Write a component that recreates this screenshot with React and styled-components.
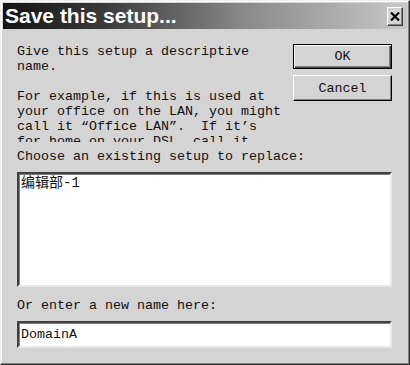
import React from 'react';
import styled, {createGlobalStyle} from "styled-components";

const GlobalStyle = createGlobalStyle`
  html, body {
    margin: 0;
    padding: 0;
    background: #d4d4d4;
  }
`

export default function App(){
    return (
        <>
            <GlobalStyle />
            <Window>
                <TitleBar>
                    <Title>Save this setup...</Title>
                    <CloseButton>
                        <svg width="10" height="9" viewBox="0 0 10 9">
                            <path d="M1 0.5 L9 8.5 M9 0.5 L1 8.5" stroke="#000" strokeWidth="2.2" />
                        </svg>
                    </CloseButton>
                </TitleBar>
                <Body>
                    <TopRow>
                        <Description>
                            {"Give this setup a descriptive name.\n\nFor example, if this is used at your office on the LAN, you might call it “Office LAN”.  If it’s for home on your DSL, call it"}
                        </Description>
                        <Buttons>
                            <Button $default>OK</Button>
                            <Button>Cancel</Button>
                        </Buttons>
                    </TopRow>
                    <Label>Choose an existing setup to replace:</Label>
                    <ListBox>
                        <ListItem>编辑部-1</ListItem>
                    </ListBox>
                    <Label $gap="11px">Or enter a new name here:</Label>
                    <Input>DomainA</Input>
                </Body>
            </Window>
        </>
    );
}

const Window = styled.div`
  width: 410px;
  height: 365px;
  box-sizing: border-box;
  background: #d4d4d4;
  border: 1px solid;
  border-color: #efefef #303030 #303030 #efefef;
  box-shadow: inset -1px -1px 0 #808080, inset 1px 1px 0 #ffffff;
  padding: 2px;
  font-family: "Liberation Mono", "Noto Sans CJK SC", monospace;
  font-size: 13.33px;
  color: #111;
`
const TitleBar = styled.div`
  height: 26px;
  display: flex;
  align-items: center;
  justify-content: space-between;
  padding: 0 4px 0 2px;
  background: linear-gradient(to right, #141414 0%, #3a3a3a 25%, #8a8a8a 60%, #c8c8c8 100%);
`
const Title = styled.div`
  font-family: "Liberation Sans", Arial, sans-serif;
  font-weight: bold;
  font-size: 21px;
  color: #ffffff;
  line-height: 26px;
`
const CloseButton = styled.div`
  width: 16px;
  height: 19px;
  box-sizing: border-box;
  display: flex;
  align-items: center;
  justify-content: center;
  background: #d4d4d4;
  border: 1px solid;
  border-color: #ffffff #404040 #404040 #ffffff;
  box-shadow: inset -1px -1px 0 #808080;
  margin-top: 1px;
`
const Body = styled.div`
  padding: 15px 15px 0 14px;
  display: flex;
  flex-direction: column;
`
const TopRow = styled.div`
  display: flex;
  gap: 10px;
`
const Description = styled.div`
  flex: 1;
  height: 98px;
  overflow: hidden;
  white-space: pre-wrap;
  line-height: 15px;
`
const Buttons = styled.div`
  width: 99px;
  display: flex;
  flex-direction: column;
  gap: 6px;
`
const Button = styled.div`
  height: ${props => props.$default ? "25px" : "26px"};
  box-sizing: border-box;
  display: flex;
  align-items: center;
  justify-content: center;
  background: #d4d4d4;
  border: 1px solid;
  border-color: ${props => props.$default ? "#000" : "#ffffff #000 #000 #ffffff"};
  box-shadow: ${props => props.$default
    ? "inset 1px 1px 0 #ffffff, inset -1px -1px 0 #404040, inset -2px -2px 0 #808080"
    : "inset -1px -1px 0 #808080"};
`
const Label = styled.div`
  line-height: 15px;
  margin-top: ${props => props.$gap || "7px"};
  margin-bottom: 8px;
`
const ListBox = styled.div`
  height: 115px;
  box-sizing: border-box;
  background: #ffffff;
  border: 2px solid;
  border-color: #404040 #e8e8e8 #e8e8e8 #404040;
  box-shadow: inset 1px 1px 0 #808080;
  padding: 1px 2px;
`
const ListItem = styled.div`
  line-height: 16px;
  font-size: 14px;
`
const Input = styled.div`
  height: 27px;
  box-sizing: border-box;
  background: #ffffff;
  border: 2px solid;
  border-color: #404040 #e8e8e8 #e8e8e8 #404040;
  box-shadow: inset 1px 1px 0 #808080;
  padding: 4px 2px;
  line-height: 16px;
`
